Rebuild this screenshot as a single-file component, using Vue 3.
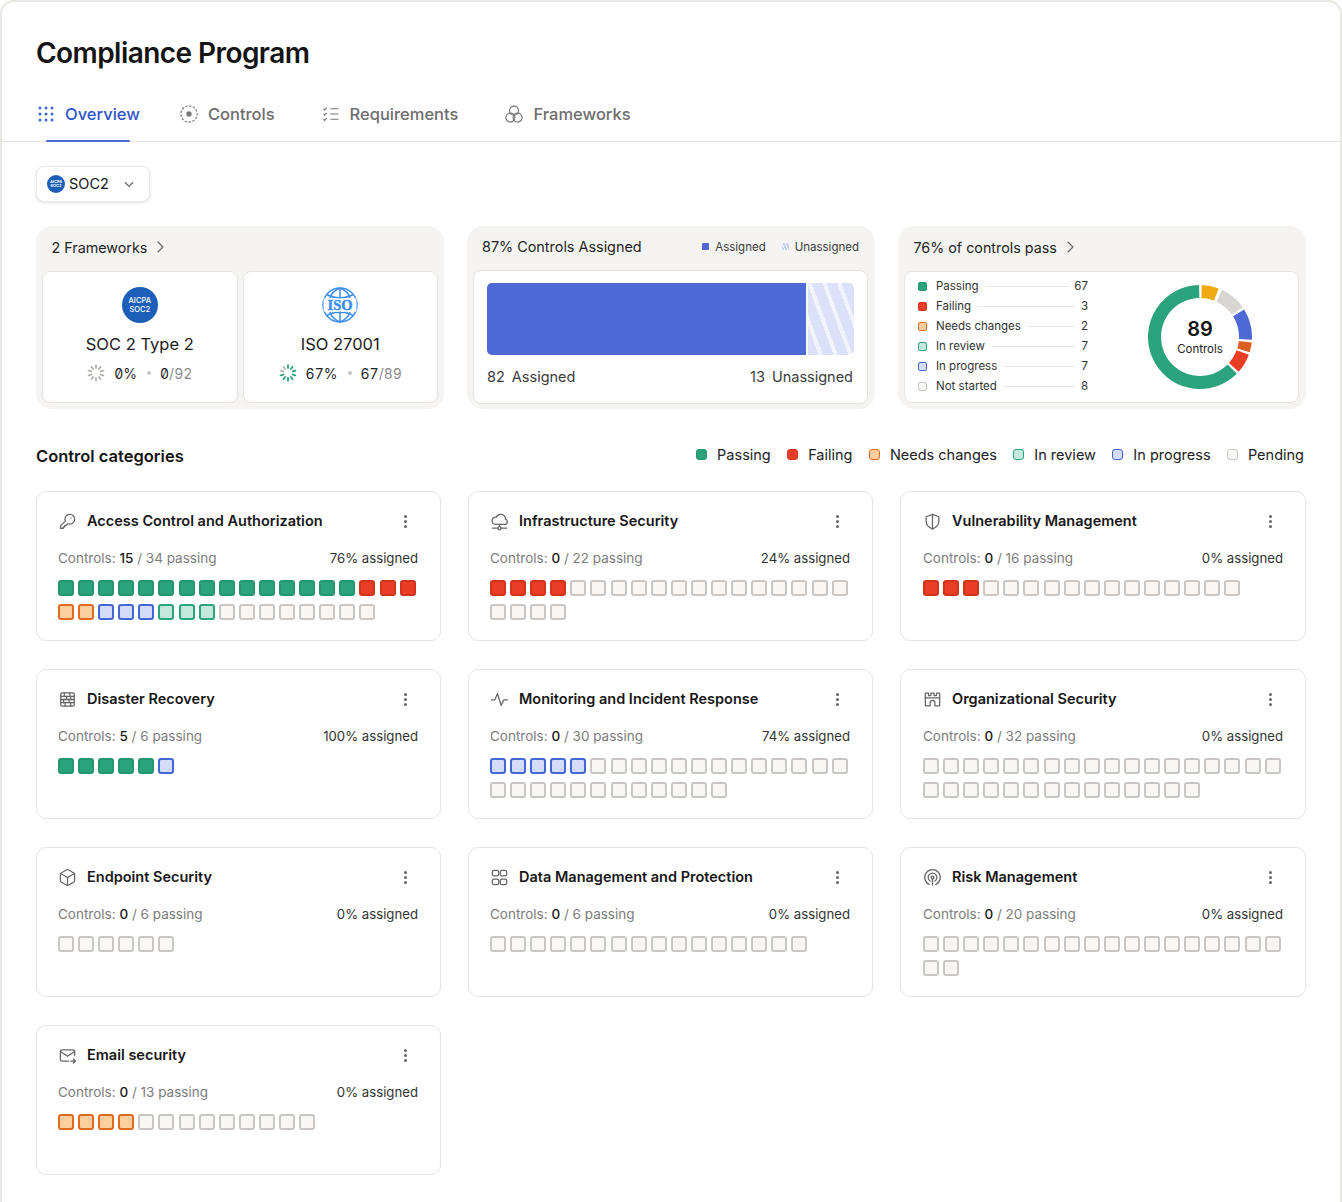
<template>
  <div class="page">
    <div class="frame">
      <header class="top">
        <h1>Compliance Program</h1>
        <nav class="tabs">
          <a v-for="tab in tabs" :key="tab.name" class="tab" :class="{ active: tab.active }">
            <svg class="tab-icon" viewBox="0 0 24 24" fill="none">
              <path v-for="d in tab.paths" :key="d" :d="d" />
              <circle v-for="(c, i) in tab.dots" :key="i" :cx="c[0]" :cy="c[1]" :r="c[2]" class="dot" />
            </svg>
            {{ tab.name }}
          </a>
        </nav>
      </header>

      <main class="body">
        <button class="select">
          <span class="mini-logo">AICPA<br />SOC2</span>
          <span class="select-label">SOC2</span>
          <svg class="select-chev" viewBox="0 0 24 24" fill="none"><path d="M5 9l7 7 7-7" /></svg>
        </button>

        <section class="summary">
          <div class="panel">
            <div class="panel-head">
              2 Frameworks
              <svg class="chev" viewBox="0 0 24 24" fill="none"><path d="M8 3l9 9-9 9" /></svg>
            </div>
            <div class="fw-grid">
              <div v-for="fw in frameworks" :key="fw.name" class="inner fw">
                <span v-if="fw.logo === 'soc'" class="soc-logo">AICPA<br />SOC2</span>
                <svg v-else class="iso-logo" viewBox="0 0 36 36" fill="none">
                  <circle cx="18" cy="18" r="17" />
                  <path d="M18 1v34M5 7.5c3.5 2.2 8 3.2 13 3.2s9.5-1 13-3.2M5 28.5c3.5-2.2 8-3.2 13-3.2s9.5 1 13 3.2M18 1c-5 2-8.5 5-10 10M18 1c5 2 8.5 5 10 10M18 35c-5-2-8.5-5-10-10M18 35c5-2 8.5-5 10-10" />
                  <rect x="1.6" y="11.5" width="32.8" height="13" fill="#fff" stroke="none" />
                  <text x="18" y="23.2" text-anchor="middle">ISO</text>
                </svg>
                <div class="fw-name">{{ fw.name }}</div>
                <div class="fw-stats">
                  <svg class="spinner" viewBox="0 0 20 20">
                    <line
                      v-for="t in ticks"
                      :key="t.id"
                      :x1="t.x1" :y1="t.y1" :x2="t.x2" :y2="t.y2"
                      :stroke="t.id < fw.green ? '#2ba37c' : '#b5b3b0'"
                    />
                  </svg>
                  <span class="num">{{ fw.pct }}</span>
                  <span class="sep"></span>
                  <span class="num">{{ fw.done }}<span class="of">/{{ fw.total }}</span></span>
                </div>
              </div>
            </div>
          </div>

          <div class="panel">
            <div class="panel-head spaced">
              87% Controls Assigned
              <div class="mini-legend">
                <span class="ml"><i class="swatch solid"></i>Assigned</span>
                <span class="ml"><i class="swatch hatched"></i>Unassigned</span>
              </div>
            </div>
            <div class="inner assign">
              <div class="bar">
                <div class="bar-on" :style="{ width: '87%' }"></div>
                <div class="bar-off"></div>
              </div>
              <div class="bar-labels">
                <span><b>82</b>Assigned</span>
                <span><b>13</b>Unassigned</span>
              </div>
            </div>
          </div>

          <div class="panel">
            <div class="panel-head">
              76% of controls pass
              <svg class="chev" viewBox="0 0 24 24" fill="none"><path d="M8 3l9 9-9 9" /></svg>
            </div>
            <div class="inner pass-card">
              <ul class="pass-list">
                <li v-for="row in passRows" :key="row.label">
                  <i class="sq small" :class="row.kind"></i>
                  <span>{{ row.label }}</span>
                  <em></em>
                  <span class="pass-val">{{ row.value }}</span>
                </li>
              </ul>
              <div class="donut">
                <svg viewBox="0 0 104 104" fill="none">
                  <path v-for="s in donut" :key="s.color" :d="s.d" :stroke="s.color" />
                </svg>
                <div class="donut-label">
                  <strong>89</strong>
                  <span>Controls</span>
                </div>
              </div>
            </div>
          </div>
        </section>

        <div class="cat-head">
          <h2>Control categories</h2>
          <div class="legend">
            <span v-for="l in legend" :key="l.label" class="legend-item">
              <i class="sq legend-sq" :class="l.kind"></i>{{ l.label }}
            </span>
          </div>
        </div>

        <section class="cats">
          <article v-for="cat in categories" :key="cat.title" class="cat">
            <div class="cat-title">
              <svg class="cat-icon" viewBox="0 0 24 24" fill="none">
                <path v-for="d in cat.icon" :key="d" :d="d" />
              </svg>
              <h3>{{ cat.title }}</h3>
              <span class="more"><i></i><i></i><i></i></span>
            </div>
            <div class="cat-meta">
              <span>Controls: <b>{{ cat.passing }}</b> / {{ cat.total }} passing</span>
              <span class="assigned">{{ cat.assigned }}% assigned</span>
            </div>
            <div class="squares">
              <i v-for="(kind, i) in expand(cat.squares)" :key="i" class="sq" :class="kind"></i>
            </div>
          </article>
        </section>
      </main>
    </div>
  </div>
</template>

<script setup>
const tabs = [
  {
    name: 'Overview',
    active: true,
    paths: [],
    dots: [4, 12, 20].flatMap((y) => [4, 12, 20].map((x) => [x, y, 2]))
  },
  {
    name: 'Controls',
    paths: ['M12 1.2a10.8 10.8 0 1 1 0 21.6 10.8 10.8 0 0 1 0-21.6z'],
    dots: [[12, 12, 3.6]]
  },
  {
    name: 'Requirements',
    paths: ['M11 5h11M11 12h11M11 19h11', 'M2 5l1.5 1.5 3-3', 'M2 12l1.5 1.5 3-3', 'M2 19l1.5 1.5 3-3'],
    dots: []
  },
  {
    name: 'Frameworks',
    paths: [
      'M12 1.5a6 6 0 1 1 0 12 6 6 0 0 1 0-12z',
      'M7.2 10.8a6 6 0 1 1 0 12 6 6 0 0 1 0-12z',
      'M16.8 10.8a6 6 0 1 1 0 12 6 6 0 0 1 0-12z'
    ],
    dots: []
  }
]

const frameworks = [
  { name: 'SOC 2 Type 2', logo: 'soc', pct: '0%', done: '0', total: '92', green: 0 },
  { name: 'ISO 27001', logo: 'iso', pct: '67%', done: '67', total: '89', green: 8 }
]

const ticks = Array.from({ length: 10 }, (_, i) => {
  const a = (i / 10) * Math.PI * 2
  const s = Math.sin(a)
  const c = Math.cos(a)
  return {
    id: i,
    x1: 10 + s * 5.5,
    y1: 10 - c * 5.5,
    x2: 10 + s * 8.6,
    y2: 10 - c * 8.6
  }
})

const passRows = [
  { label: 'Passing', value: 67, kind: 'pass' },
  { label: 'Failing', value: 3, kind: 'fail' },
  { label: 'Needs changes', value: 2, kind: 'needs' },
  { label: 'In review', value: 7, kind: 'review' },
  { label: 'In progress', value: 7, kind: 'progress' },
  { label: 'Not started', value: 8, kind: 'pending' }
]

function arc(from, to) {
  const r = 45.5
  const p = (deg) => {
    const a = (deg * Math.PI) / 180
    return `${(52 + Math.sin(a) * r).toFixed(2)} ${(52 - Math.cos(a) * r).toFixed(2)}`
  }
  const large = to - from > 180 ? 1 : 0
  return `M${p(from)}A${r} ${r} 0 ${large} 1 ${p(to)}`
}

const donut = [
  { color: '#efa913', d: arc(2, 21) },
  { color: '#d8d6d3', d: arc(25, 55) },
  { color: '#4f69d4', d: arc(58, 93) },
  { color: '#dc5f22', d: arc(96, 107) },
  { color: '#e93d25', d: arc(110, 132) },
  { color: '#2ba37c', d: arc(135, 359) }
]

const legend = [
  { label: 'Passing', kind: 'pass' },
  { label: 'Failing', kind: 'fail' },
  { label: 'Needs changes', kind: 'needs' },
  { label: 'In review', kind: 'review' },
  { label: 'In progress', kind: 'progress' },
  { label: 'Pending', kind: 'pending' }
]

const icons = {
  key: ['M9.2 11.5a6.2 6.2 0 1 1 3.3 3.3l-2 2h-2v2h-2v2H3.2v-3.3z', 'M16.5 7.5h.01'],
  cloud: ['M17.5 15.5H7a4.5 4.5 0 1 1 1-8.9A6 6 0 0 1 19.5 9a3.3 3.3 0 0 1-2 6.5z', 'M12 15.5v2.5', 'M3 20.5h7M14 20.5h7', 'M12 18.5a2 2 0 1 1 0 4 2 2 0 0 1 0-4z'],
  shield: ['M12 3l8 3v6c0 5-3.5 7.5-8 9.5-4.5-2-8-4.5-8-9.5V6z', 'M12 3v18.5'],
  brick: ['M5 3.5h14a1.5 1.5 0 0 1 1.5 1.5v14a1.5 1.5 0 0 1-1.5 1.5H5A1.5 1.5 0 0 1 3.5 19V5A1.5 1.5 0 0 1 5 3.5z', 'M3.5 8h17M3.5 12h17M3.5 16h17', 'M8 3.5V8M15 3.5V8M11 8v4M16 8v4M7 12v4M14 12v4M9 16v4.5M16 16v4.5'],
  activity: ['M2 12.5h4l3.5-8 4.5 15 3.5-7h4.5'],
  castle: ['M3 4h4v3h3V4h4v3h3V4h4v16h-6v-4a3 3 0 0 0-6 0v4H3z', 'M3 10h18'],
  box: ['M21 8a2 2 0 0 0-1-1.73l-7-4a2 2 0 0 0-2 0l-7 4A2 2 0 0 0 3 8v8a2 2 0 0 0 1 1.73l7 4a2 2 0 0 0 2 0l7-4A2 2 0 0 0 21 16Z', 'M3.3 7l8.7 5 8.7-5', 'M12 22V12'],
  grid: ['M5 3h4a2 2 0 0 1 2 2v3a2 2 0 0 1-2 2H5a2 2 0 0 1-2-2V5a2 2 0 0 1 2-2z', 'M15 3h4a2 2 0 0 1 2 2v3a2 2 0 0 1-2 2h-4a2 2 0 0 1-2-2V5a2 2 0 0 1 2-2z', 'M5 14h4a2 2 0 0 1 2 2v3a2 2 0 0 1-2 2H5a2 2 0 0 1-2-2v-3a2 2 0 0 1 2-2z', 'M15 14h4a2 2 0 0 1 2 2v3a2 2 0 0 1-2 2h-4a2 2 0 0 1-2-2v-3a2 2 0 0 1 2-2z'],
  radar: ['M8 20.8a9.8 9.8 0 1 1 8 0', 'M9 16.5a5.5 5.5 0 1 1 6 0', 'M12 10.2a1.8 1.8 0 1 1 0 3.6 1.8 1.8 0 0 1 0-3.6z', 'M12 14v7.5'],
  mail: ['M21 12V7a2 2 0 0 0-2-2H5a2 2 0 0 0-2 2v10a2 2 0 0 0 2 2h8.5', 'M3 7l9 6 9-6', 'M16 19h6M19.5 16.5L22 19l-2.5 2.5']
}

const categories = [
  { title: 'Access Control and Authorization', icon: icons.key, passing: 15, total: 34, assigned: 76, squares: [['pass', 15], ['fail', 3], ['needs', 2], ['progress', 3], ['review', 3], ['pending', 8]] },
  { title: 'Infrastructure Security', icon: icons.cloud, passing: 0, total: 22, assigned: 24, squares: [['fail', 4], ['pending', 18]] },
  { title: 'Vulnerability Management', icon: icons.shield, passing: 0, total: 16, assigned: 0, squares: [['fail', 3], ['pending', 13]] },
  { title: 'Disaster Recovery', icon: icons.brick, passing: 5, total: 6, assigned: 100, squares: [['pass', 5], ['progress', 1]] },
  { title: 'Monitoring and Incident Response', icon: icons.activity, passing: 0, total: 30, assigned: 74, squares: [['progress', 5], ['pending', 25]] },
  { title: 'Organizational Security', icon: icons.castle, passing: 0, total: 32, assigned: 0, squares: [['pending', 32]] },
  { title: 'Endpoint Security', icon: icons.box, passing: 0, total: 6, assigned: 0, squares: [['pending', 6]] },
  { title: 'Data Management and Protection', icon: icons.grid, passing: 0, total: 6, assigned: 0, squares: [['pending', 16]] },
  { title: 'Risk Management', icon: icons.radar, passing: 0, total: 20, assigned: 0, squares: [['pending', 20]] },
  { title: 'Email security', icon: icons.mail, passing: 0, total: 13, assigned: 0, squares: [['needs', 4], ['pending', 9]] }
]

function expand(groups) {
  return groups.flatMap(([kind, n]) => Array(n).fill(kind))
}
</script>

<style>
html, body {
  margin: 0;
  background: #fff;
  overflow: hidden;
}
</style>

<style scoped>
.page {
  height: 1202px;
  overflow: hidden;
  background: #fff;
  font-family: Inter, "Noto Sans", sans-serif;
  color: #141414;
}

.frame {
  height: 1230px;
  box-sizing: border-box;
  border: 2px solid #e9e7e3;
  border-radius: 14px;
  background: #fff;
}

.top {
  border-bottom: 1px solid #e6e4e2;
}

h1 {
  margin: 0;
  padding: 34px 0 0 34px;
  font-size: 28px;
  line-height: 34px;
  font-weight: 600;
  letter-spacing: -0.56px;
}

.tabs {
  display: flex;
  gap: 47px;
  margin-top: 26px;
  padding-left: 35px;
}

.tab {
  position: relative;
  display: flex;
  align-items: center;
  gap: 10px;
  height: 45px;
  padding-bottom: 9px;
  box-sizing: border-box;
  font-size: 16.5px;
  font-weight: 500;
  color: #6e6e6e;
}

.tab.active {
  color: #2f55c9;
  margin-right: -7px;
}

.tab.active::after {
  content: '';
  position: absolute;
  left: 9px;
  right: 10px;
  bottom: -1px;
  height: 2px;
  border-radius: 2px;
  background: #4f69d4;
}

.tab-icon {
  width: 18px;
  height: 18px;
  stroke: #777;
  stroke-width: 1.6;
}

.tab:nth-child(2) .tab-icon path {
  stroke-dasharray: 3.2 2;
}

.dot {
  fill: #777;
  stroke: none;
}

.active .dot {
  fill: #4167d3;
}

.body {
  padding: 24px 34px 0;
}

.select {
  display: flex;
  align-items: center;
  width: 114px;
  height: 36px;
  padding: 0 0 0 10px;
  border: 1px solid #ebe9e7;
  border-radius: 8px;
  background: #fff;
  box-shadow: 0 1px 3px rgba(0, 0, 0, 0.12);
  font: 400 14.5px Inter, sans-serif;
  color: #141414;
}

.select-label {
  padding-bottom: 2px;
}

.mini-logo {
  display: block;
  width: 18px;
  height: 18px;
  margin-right: 4px;
  padding-top: 5px;
  box-sizing: border-box;
  border-radius: 50%;
  background: #1c5fb8;
  color: #fff;
  font-size: 4px;
  line-height: 4px;
  font-weight: 600;
  text-align: center;
  overflow: hidden;
}

.select-chev {
  width: 14px;
  height: 14px;
  margin-left: 13px;
  stroke: #666;
  stroke-width: 2;
}

.summary {
  display: grid;
  grid-template-columns: repeat(3, 1fr);
  gap: 23px;
  margin-top: 24px;
}

.panel {
  height: 183px;
  box-sizing: border-box;
  padding: 0 7px 6px 6px;
  border-radius: 16px;
  background: #f5f4f2;
  display: flex;
  flex-direction: column;
}

.panel:first-child {
  padding-right: 6px;
}

.panel-head {
  display: flex;
  align-items: center;
  gap: 6px;
  height: 45px;
  flex: none;
  box-sizing: border-box;
  padding: 0 9.5px 3px;
  font-size: 14.3px;
  color: #1f1f1f;
}

.panel-head.spaced {
  justify-content: space-between;
  padding: 0 9px 4px;
  font-size: 14.4px;
}

.chev {
  width: 14px;
  height: 14px;
  stroke: #666;
  stroke-width: 2;
}

.inner {
  flex: 1;
  box-sizing: border-box;
  background: #fff;
  border: 1px solid #e6e4e2;
  border-radius: 8px;
}

.fw-grid {
  flex: 1;
  display: grid;
  grid-template-columns: 1fr 1fr;
  gap: 5px;
}

.fw {
  display: flex;
  flex-direction: column;
  align-items: center;
  padding-top: 15px;
}

.soc-logo {
  display: block;
  width: 36px;
  height: 36px;
  padding-top: 10px;
  box-sizing: border-box;
  border-radius: 50%;
  background: #1c5fb8;
  color: #fff;
  font-size: 7.5px;
  line-height: 8.5px;
  font-weight: 500;
  text-align: center;
}

.iso-logo {
  width: 36px;
  height: 36px;
  stroke: #3d8ff0;
  stroke-width: 1.5;
}

.iso-logo text {
  font-family: "Liberation Serif", serif;
  font-weight: 700;
  font-size: 14.5px;
  fill: #3d8ff0;
  stroke: #3d8ff0;
  stroke-width: 0.5;
}

.fw-name {
  margin-top: 9px;
  font-size: 16.5px;
  line-height: 24px;
  color: #1a1a1a;
}

.fw-stats {
  display: flex;
  align-items: center;
  gap: 9px;
  margin-top: 8px;
  font-size: 14px;
  color: #1f1f1f;
}

.spinner {
  width: 18px;
  height: 18px;
  stroke-width: 2;
  stroke-linecap: round;
}

.num {
  font-feature-settings: "tnum", "zero";
}

.of {
  color: #8b8b8b;
}

.sep {
  width: 4px;
  height: 4px;
  margin-left: 1px;
  border-radius: 50%;
  background: #c8c6c3;
}

.mini-legend {
  display: flex;
  gap: 16px;
  font-size: 11.5px;
  color: #3c3c3c;
}

.ml {
  display: flex;
  align-items: center;
  gap: 6px;
}

.swatch {
  width: 7px;
  height: 7px;
  border-radius: 1px;
}

.swatch.solid {
  background: #4f69d4;
}

.swatch.hatched {
  background: repeating-linear-gradient(70deg, #c9d2f4 0 2px, #eef0fb 2px 3px);
}

.assign {
  margin: -1px 0;
  padding: 12px 13px 0;
}

.bar {
  display: flex;
  gap: 2px;
  height: 72px;
  border-radius: 5px;
  overflow: hidden;
}

.bar-on {
  background: #4f69d4;
}

.bar-off {
  flex: 1;
  background: repeating-linear-gradient(70deg, #dbe1f8 0 10px, #f3f4fb 10px 14px);
}

.bar-labels {
  display: flex;
  justify-content: space-between;
  margin-top: 13px;
  padding-right: 1px;
  font-size: 14.5px;
  line-height: 18px;
  color: #3c3c3c;
}

.bar-labels b {
  font-weight: 400;
  margin-right: 7px;
}

.pass-card {
  display: flex;
  align-items: flex-start;
  padding: 4px 10px 0 13px;
}

.pass-list {
  list-style: none;
  margin: 0;
  padding: 0;
  width: 170px;
  flex: none;
  font-size: 11.5px;
  color: #333;
}

.pass-list li {
  display: flex;
  align-items: center;
  height: 20px;
}

.pass-list em {
  flex: 1;
  height: 1px;
  margin: 0 5px 0 7px;
  background: #e8e6e4;
}

.pass-val {
  min-width: 8px;
  text-align: right;
}

.donut {
  position: relative;
  width: 104px;
  height: 104px;
  margin: 9px 0 0 60px;
}

.donut svg {
  display: block;
  width: 104px;
  height: 104px;
  stroke-width: 13;
}

.donut-label {
  position: absolute;
  inset: 0;
  display: flex;
  flex-direction: column;
  align-items: center;
  justify-content: center;
}

.donut-label strong {
  font-size: 20px;
  line-height: 24px;
  font-weight: 600;
}

.donut-label span {
  font-size: 11.5px;
  line-height: 16px;
  color: #222;
}

.cat-head {
  display: flex;
  align-items: center;
  justify-content: space-between;
  margin-top: 35px;
  height: 24px;
}

h2 {
  margin: 0;
  font-size: 16.5px;
  font-weight: 600;
}

.legend {
  display: flex;
  gap: 16.4px;
  padding-bottom: 3px;
  font-size: 14.5px;
  color: #222;
  margin-right: 2px;
}

.legend-item {
  display: flex;
  align-items: center;
  gap: 10px;
}

.cats {
  display: grid;
  grid-template-columns: 405px 405px 1fr;
  column-gap: 27px;
  row-gap: 28px;
  margin-top: 23px;
}

.cat {
  height: 150px;
  box-sizing: border-box;
  padding: 19px 22px 0 21px;
  border: 1px solid #e6e4e2;
  border-radius: 10px;
  background: #fff;
}

.cat:nth-child(3n) {
  padding-left: 22px;
}

.cat-title {
  display: flex;
  align-items: center;
  height: 20px;
}

.cat-icon {
  flex: none;
  width: 19px;
  height: 19px;
  margin-right: 10px;
  stroke: #666;
  stroke-width: 1.6;
  stroke-linecap: round;
  stroke-linejoin: round;
}

h3 {
  flex: 1;
  margin: 0;
  font-size: 14.5px;
  line-height: 20px;
  font-weight: 600;
  color: #171717;
}

.more {
  display: flex;
  flex-direction: column;
  gap: 2px;
  margin-right: 11px;
}

.more i {
  width: 3px;
  height: 3px;
  border-radius: 50%;
  background: #666;
}

.cat-meta {
  display: flex;
  justify-content: space-between;
  align-items: baseline;
  margin-top: 17px;
  font-size: 13.5px;
  line-height: 20px;
  color: #7d7d7d;
}

.cat-meta b {
  font-weight: 500;
  color: #1a1a1a;
}

.assigned {
  font-size: 13.2px;
  color: #333;
}

.squares {
  display: flex;
  flex-wrap: wrap;
  gap: 8px 4.1px;
  margin-top: 12px;
}

.sq {
  display: block;
  width: 16px;
  height: 16px;
  box-sizing: border-box;
  border: 2px solid;
  border-radius: 3px;
  flex: none;
}

.sq.small {
  width: 9px;
  height: 9px;
  margin-right: 9px;
  border-width: 1.75px;
  border-radius: 2px;
}

.legend-sq {
  width: 11px;
  height: 11px;
  border-width: 1.75px;
}

.pass {
  background: #2ba37c;
  border-color: #27966f;
}

.fail {
  background: #e93d25;
  border-color: #d2331d;
}

.needs {
  background: #fdcf9f;
  border-color: #e06a24;
}

.review {
  background: #c5e8dc;
  border-color: #2ba37c;
}

.progress {
  background: #d5dcf7;
  border-color: #4167d3;
}

.pending {
  background: #f8f7f5;
  border-color: #c9c6c4;
}
</style>
